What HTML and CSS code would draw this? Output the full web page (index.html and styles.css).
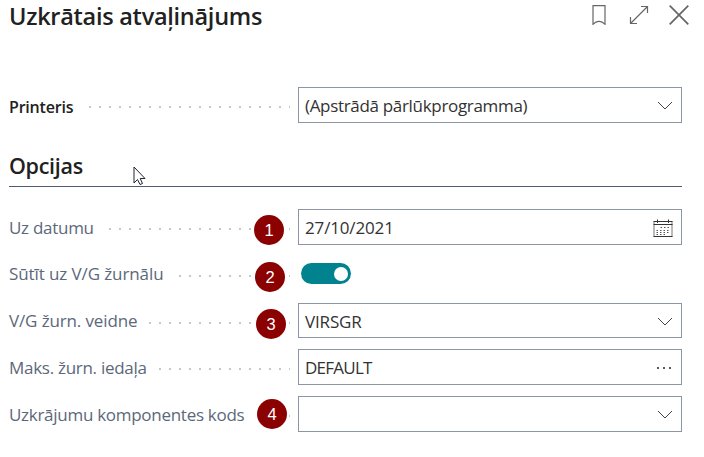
FILE: index.html
```html
<!DOCTYPE html>
<html lang="lv">
<head>
<meta charset="utf-8">
<title>Uzkrātais atvaļinājums</title>
<link rel="stylesheet" href="styles.css">
</head>
<body>
<main class="dialog">
  <header class="header">
    <h1 class="title">Uzkrātais atvaļinājums</h1>
    <div class="actions">
      <svg width="14" height="20" viewBox="0 0 14 20"><path d="M1 .7h12v18.6l-3-2.2q-3-1.6-6 0l-3 2.2z"/></svg>
      <svg width="20" height="20" viewBox="0 0 20 20"><path d="M1.500 18.500 18.500 1.500M12 1.500h6.500v6.500M1.500 12v6.500h6.500"/></svg>
      <svg class="close" width="20" height="20" viewBox="0 0 20 20"><path d="M.7.7l18.600 18.600M19.300.7.7 19.300"/></svg>
    </div>
  </header>

  <div class="row printer">
    <div class="caption strong"><span class="label">Printeris</span><span class="dots"></span></div>
    <div class="field"><span class="t-browser">(Apstrādā pārlūkprogramma)</span><svg width="16" height="10" viewBox="0 0 16 10"><path d="M1 1l7 7 7-7"/></svg></div>
  </div>

  <h2 class="section">Opcijas</h2>

  <div class="row date">
    <div class="caption"><span class="label">Uz datumu</span><span class="dots"></span><span class="badge b1">1</span></div>
    <div class="field"><span class="t-date">27/10/2021</span>
      <svg class="calendar" width="20" height="19" viewBox="0 0 20 19"><path class="frame" d="M1 2.500v15M19 2.500v15"/><path d="M.5 2.500h19M.5 5.500h19M.5 17.500h19M4.500.5v3.500M15.500.5v3.500"/><path class="days" d="M7.500 8.500h9M3.500 11.500h13M3.500 13.500h13M3.500 15.500h9"/></svg>
    </div>
  </div>
  <div class="row send">
    <div class="caption"><span class="label">Sūtīt uz V/G žurnālu</span><span class="dots"></span><span class="badge b2">2</span></div>
    <div class="toggle"><span class="knob"></span></div>
  </div>
  <div class="row template">
    <div class="caption"><span class="label">V/G žurn. veidne</span><span class="dots"></span><span class="badge b3">3</span></div>
    <div class="field"><span class="t-virsgr">VIRSGR</span><svg width="16" height="10" viewBox="0 0 16 10"><path d="M1 1l7 7 7-7"/></svg></div>
  </div>
  <div class="row batch">
    <div class="caption"><span class="label">Maks. žurn. iedaļa</span><span class="dots"></span></div>
    <div class="field"><span class="t-default">DEFAULT</span><svg class="more" width="16" height="4" viewBox="0 0 16 4"><circle cx="2" cy="2" r="1.100"/><circle cx="8" cy="2" r="1.100"/><circle cx="14" cy="2" r="1.100"/></svg></div>
  </div>
  <div class="row code">
    <div class="caption"><span class="label">Uzkrājumu komponentes kods</span><span class="dots"></span><span class="badge b4">4</span></div>
    <div class="field"><span></span><svg width="16" height="10" viewBox="0 0 16 10"><path d="M1 1l7 7 7-7"/></svg></div>
  </div>
  <svg class="pointer" width="13" height="20" viewBox="0 0 13 20"><path d="M1 1v16l3.500-3.500 2.500 5 2.500-1-2.300-5H12z"/></svg>
</main>
</body>
</html>
```
FILE: styles.css
```css
* { box-sizing: border-box; }
body {
  margin: 0;
  background: #fff;
  color: #323232;
  font: 17px/24px "Open Sans", "Noto Sans", sans-serif;
}
.dialog {
  position: relative;
  width: 704px;
  height: 457px;
  padding: 0 22px 0 9px;
  overflow: hidden;
}
.header { display: flex; justify-content: space-between; height: 87px; }
.title, .section { margin: 0; font-weight: 600; color: #212121; white-space: nowrap; }
.title { font-size: 23.5px; line-height: 32px; letter-spacing: -0.27px; }
.actions {
  display: flex;
  gap: 23px;
  height: 20px;
  margin: 5px -7px 0 0;
}
svg { display: block; flex: none; fill: none; stroke: #666; stroke-width: 1.2; }
.actions svg:nth-child(2) { margin-right: -3px; }
.actions .close { stroke-width: 1.7; }
.row { display: flex; height: 36px; }
.caption {
  position: relative;
  display: flex;
  align-items: center;
  width: 281px;
  margin-right: 8px;
  color: #5c687a;
  white-space: nowrap;
}
.strong { color: #212121; font-weight: 600; font-size: 16px; }
.label { flex: none; width: 80px; padding-top: 1px; letter-spacing: -0.28px; }
.printer .label { width: 75px; padding-top: 3px; letter-spacing: -0.2px; }
.date .label { width: 95px; }
.send .label { width: 165px; letter-spacing: -0.1px; }
.template .label { width: 135px; letter-spacing: -0.13px; }
.batch .label { width: 145px; }
.code .label { width: 265px; }
.dots {
  flex: 1;
  height: 4px;
  margin-top: 4px;
  background: radial-gradient(circle at 5px 2px, #c4c7cb 0 1px, transparent 1.5px) 0 0 / 10px 4px;
  background-position: calc(100% + 5px) 0;
}
.field {
  display: flex;
  align-items: center;
  justify-content: space-between;
  width: 384px;
  height: 100%;
  padding: 2px 8px 0 6px;
  border: 1px solid #8b95a3;
  white-space: nowrap;
}
.t-browser { letter-spacing: -0.32px; }
.t-date { letter-spacing: -0.15px; }
.t-virsgr { letter-spacing: -0.15px; }
.t-default { letter-spacing: -0.75px; }
.field svg { stroke: #444; stroke-width: 1; }
.field .more { fill: #333; stroke: none; margin-right: 1px; }
.field .calendar { stroke: #333; }
.calendar .frame { stroke: #777; }
.calendar .days { stroke: #555; stroke-dasharray: 1.5 2; }
.section {
  height: 64px;
  padding-top: 28px;
  border-bottom: 1px solid #505c6d;
  font-size: 21.5px;
  line-height: 30px;
  letter-spacing: -0.3px;
}
.date { margin-top: 22px; }
.send { height: 21px; margin-top: 18px; }
.template { height: 35px; margin-top: 19px; }
.batch { margin-top: 11px; }
.code { margin-top: 11px; }
.toggle {
  display: flex;
  align-items: center;
  justify-content: flex-end;
  width: 50px;
  height: 21px;
  margin-left: 3px;
  padding-right: 3px;
  border-radius: 11px;
  background: #00838f;
}
.knob { width: 14px; height: 14px; border-radius: 50%; background: #fff; }
.badge {
  position: absolute;
  width: 30px;
  height: 30px;
  border-radius: 50%;
  background: #8b0000;
  color: #fff;
  font: 16.5px/30px "Liberation Sans", sans-serif;
  text-align: center;
}
.b1 { left: 245px; top: 6px; }
.b2 { left: 246px; top: -1px; }
.b3 { left: 247px; top: 6px; }
.b4 { left: 248px; top: 3px; }
.pointer { position: absolute; left: 133px; top: 166px; fill: #fff; stroke: #223; stroke-width: 1; }
```
